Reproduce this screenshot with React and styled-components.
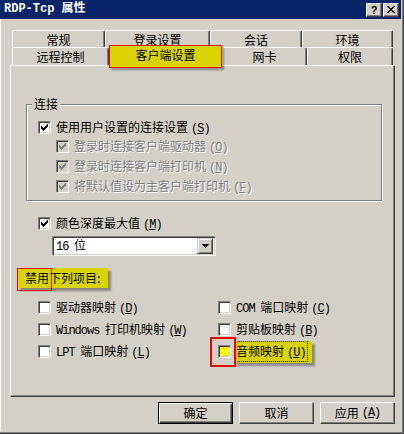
import React from "react";
import styled, { createGlobalStyle, css } from "styled-components";

const FACE = "#D4D0C8";
const YELLOW = "#D9D400";
const RED = "#FF0000";
const UI_FONT = `"Noto Sans CJK SC", "Noto Sans", sans-serif`;

const GlobalStyle = createGlobalStyle`
  html, body { margin: 0; padding: 0; background: ${FACE}; }
  body { font-family: ${UI_FONT}; font-size: 12px; color: #000; }
  *, *::before, *::after { box-sizing: border-box; }
`;

const Window = styled.div`
  width: 404px;
  height: 434px;
  display: flex;
  flex-direction: column;
  background: ${FACE};
  border-right: 1px solid #404040;
  border-bottom: 1px solid #404040;
  box-shadow: inset -1px -1px 0 #808080;
  padding: 0 2px 2px 0;
`;

const TitleBar = styled.div`
  height: 19px;
  flex: 0 0 19px;
  background: #0a246a;
  display: flex;
  align-items: center;
  padding: 0 2px 0 4px;
  gap: 1px;
`;

const TitleText = styled.div`
  flex: 1;
  color: #fff;
  font-family: "Liberation Mono", "Noto Sans CJK SC", monospace;
  font-weight: bold;
  font-size: 12px;
  line-height: 19px;
  white-space: pre;
`;

const CaptionButton = styled.div`
  width: 16px;
  height: 14px;
  background: ${FACE};
  border-top: 1px solid #fff;
  border-left: 1px solid #fff;
  border-right: 1px solid #404040;
  border-bottom: 1px solid #404040;
  box-shadow: inset -1px -1px 0 #808080;
  display: flex;
  align-items: center;
  justify-content: center;
  font-family: "Liberation Sans", sans-serif;
  font-weight: bold;
  font-size: 11px;
  line-height: 12px;
  color: #000;
`;

const Body = styled.div`
  flex: 1;
  display: flex;
  flex-direction: column;
  padding: 11px 6px 0 9px;
  border-left: 1px solid #fff;
`;

const TabRow = styled.div`
  display: flex;
  margin-left: 2px;
  width: 381px;
  height: ${(p) => p.$h}px;
  flex: 0 0 ${(p) => p.$h}px;
`;

const Tab = styled.div`
  flex: 0 0 ${(p) => p.$w}px;
  height: 100%;
  border-top: 1px solid #fff;
  border-left: 1px solid #fff;
  border-right: 1px solid #404040;
  box-shadow: inset -1px 0 0 #808080;
  border-radius: 2px 2px 0 0;
  display: flex;
  align-items: center;
  justify-content: center;
  font-size: 12px;
  line-height: 14px;
  padding-top: 1px;
  ${(p) =>
    p.$marked &&
    css`
      position: relative;
      z-index: 2;
      height: 23px;
      margin-top: -2px;
      background: ${YELLOW};
      border: 1px solid ${RED};
      border-radius: 0;
      box-shadow: 2px 2px 2px rgba(0, 0, 0, 0.35);
      padding-top: 0;
      padding-bottom: 3px;
    `}
`;

const Panel = styled.div`
  height: 332px;
  flex: 0 0 332px;
  border-top: 1px solid #fff;
  border-left: 1px solid #fff;
  border-right: 1px solid #404040;
  border-bottom: 1px solid #404040;
  box-shadow: inset -1px -1px 0 #808080;
  display: flex;
  flex-direction: column;
  align-items: flex-start;
`;

const GroupBox = styled.div`
  margin: 38px 0 0 15px;
  width: 356px;
  border: 1px solid #808080;
  box-shadow: inset 1px 1px 0 #fff, 1px 1px 0 #fff;
  display: flex;
  flex-direction: column;
  align-items: flex-start;
  padding: 0 0 7px 11px;
`;

const Legend = styled.div`
  margin: -8px 0 0 -6px;
  padding: 0 2px;
  background: ${FACE};
  line-height: 14px;
  height: 14px;
`;

const SubList = styled.div`
  display: flex;
  flex-direction: column;
  gap: 7px;
  margin: ${(p) => p.$mt || 0}px 0 0 ${(p) => p.$ml || 0}px;
`;

const Row = styled.div`
  position: relative;
  display: flex;
  align-items: center;
  gap: 5px;
  height: 13px;
  margin: ${(p) => p.$mt || 0}px 0 0 ${(p) => p.$ml || 0}px;
  white-space: nowrap;
`;

const Box = styled.span`
  width: 13px;
  height: 13px;
  flex: 0 0 13px;
  border: 1px solid;
  border-color: #808080 #fff #fff #808080;
  box-shadow: inset 1px 1px 0 #404040, inset -1px -1px 0 ${FACE};
  background: ${(p) => (p.$disabled ? FACE : p.$hl ? "#FFFF00" : "#fff")};
  display: flex;
  align-items: center;
  justify-content: center;
`;

const Label = styled.span`
  font-size: 12px;
  line-height: 13px;
  color: ${(p) => (p.$disabled ? "#808080" : "#000")};
  text-shadow: ${(p) => (p.$disabled ? "1px 1px 0 #fff" : "none")};
`;

const Latin = styled.span`
  font-family: "Liberation Mono", monospace;
  font-size: 12px;
  letter-spacing: -1px;
  margin-right: 3px;
`;

const Accel = styled.span`
  margin-left: 3px;
  font-family: "Liberation Mono", monospace;
  font-size: 12px;
  letter-spacing: -1px;
  u {
    text-decoration: underline;
    text-underline-offset: 1px;
  }
`;

const Select = styled.div`
  margin: 6px 0 0 41px;
  width: 164px;
  height: 20px;
  border: 1px solid;
  border-color: #808080 #fff #fff #808080;
  box-shadow: inset 1px 1px 0 #404040, inset -1px -1px 0 ${FACE};
  background: #fff;
  display: flex;
  align-items: center;
  padding: 2px 2px 2px 3px;
`;

const SelectValue = styled.span`
  flex: 1;
  font-size: 12px;
  line-height: 14px;
`;

const ArrowButton = styled.span`
  width: 16px;
  height: 16px;
  background: ${FACE};
  border-top: 1px solid ${FACE};
  border-left: 1px solid ${FACE};
  border-right: 1px solid #404040;
  border-bottom: 1px solid #404040;
  box-shadow: inset 1px 1px 0 #fff, inset -1px -1px 0 #808080;
  display: flex;
  align-items: center;
  justify-content: center;
`;

const Marked = styled.div`
  position: relative;
  margin: 12px 0 0 6px;
  height: 20px;
  background: ${YELLOW};
  box-shadow: 3px 3px 2px rgba(0, 0, 0, 0.35);
  display: flex;
  align-items: center;
  padding: 0 8px 0 8px;
  font-size: 12px;
  line-height: 14px;
`;

const RedFrame = styled.span`
  position: absolute;
  left: ${(p) => p.$l}px;
  top: ${(p) => p.$t}px;
  width: ${(p) => p.$w}px;
  height: ${(p) => p.$h}px;
  border: ${(p) => p.$b}px solid ${RED};
  z-index: 3;
  pointer-events: none;
`;

const Grid = styled.div`
  margin: 13px 0 0 27px;
  display: grid;
  grid-template-columns: 180px auto;
  row-gap: 9px;
`;

const HlLabel = styled.span`
  margin-left: -2px;
  height: 22px;
  background: ${YELLOW};
  box-shadow: 3px 3px 2px rgba(0, 0, 0, 0.35);
  display: flex;
  align-items: center;
  padding: 0 5px 0 2px;
`;

const Focus = styled.span`
  outline: 1px dotted #000;
  outline-offset: 0;
  padding: 2px 1px 1px 0;
  line-height: 13px;
`;

const ButtonRow = styled.div`
  display: flex;
  justify-content: flex-end;
  gap: 6px;
  margin: 5px 0 0 0;
`;

const Button = styled.div`
  width: 75px;
  height: 22px;
  background: ${FACE};
  display: flex;
  align-items: center;
  justify-content: center;
  font-size: 12px;
  line-height: 14px;
  ${(p) =>
    p.$default
      ? css`
          border: 1px solid #000;
          box-shadow: inset 1px 1px 0 #fff, inset -1px -1px 0 #404040,
            inset -2px -2px 0 #808080;
        `
      : css`
          border-top: 1px solid #fff;
          border-left: 1px solid #fff;
          border-right: 1px solid #404040;
          border-bottom: 1px solid #404040;
          box-shadow: inset -1px -1px 0 #808080;
        `}
`;

const CheckMark = ({ color = "#000" }) => (
  <svg width="7" height="7" viewBox="0 0 7 7" shapeRendering="crispEdges">
    <path
      fill={color}
      d="M0 2h1v3H0z M1 3h1v3H1z M2 4h1v3H2z M3 3h1v3H3z M4 2h1v3H4z M5 1h1v3H5z M6 0h1v3H6z"
    />
  </svg>
);

const CloseGlyph = () => (
  <svg width="8" height="7" viewBox="0 0 8 7" shapeRendering="crispEdges">
    <path
      fill="#000"
      d="M0 0h2v1H0z M6 0h2v1H6z M1 1h2v1H1z M5 1h2v1H5z M2 2h4v1H2z M3 3h2v1H3z M2 4h4v1H2z M1 5h2v1H1z M5 5h2v1H5z M0 6h2v1H0z M6 6h2v1H6z"
    />
  </svg>
);

const DownArrow = () => (
  <svg width="7" height="4" viewBox="0 0 7 4" shapeRendering="crispEdges">
    <path fill="#000" d="M0 0h7v1H0z M1 1h5v1H1z M2 2h3v1H2z M3 3h1v1H3z" />
  </svg>
);

const Check = ({ checked, disabled, hl, children, accel, ml, mt, frame, focusHl }) => {
  const text = (
    <>
      {children}
      <Accel>
        (<u>{accel}</u>)
      </Accel>
    </>
  );
  return (
    <Row $ml={ml} $mt={mt}>
      <Box $disabled={disabled} $hl={hl}>
        {checked && <CheckMark color={disabled ? "#808080" : "#000"} />}
      </Box>
      {frame && <RedFrame $l={-8} $t={-8} $w={26} $h={30} $b={2} />}
      {focusHl ? (
        <HlLabel>
          <Focus>{text}</Focus>
        </HlLabel>
      ) : (
        <Label $disabled={disabled}>{text}</Label>
      )}
    </Row>
  );
};

export default function App() {
  return (
    <>
      <GlobalStyle />
      <Window>
        <TitleBar>
          <TitleText>RDP-Tcp 属性</TitleText>
          <CaptionButton>?</CaptionButton>
          <CaptionButton>
            <CloseGlyph />
          </CaptionButton>
        </TitleBar>
        <Body>
          <TabRow $h={17}>
            <Tab $w={93}>常规</Tab>
            <Tab $w={105}>登录设置</Tab>
            <Tab $w={92}>会话</Tab>
            <Tab $w={91}>环境</Tab>
          </TabRow>
          <TabRow $h={18}>
            <Tab $w={97}>远程控制</Tab>
            <Tab $w={113} $marked>
              客户端设置
            </Tab>
            <Tab $w={85}>网卡</Tab>
            <Tab $w={86}>权限</Tab>
          </TabRow>
          <Panel>
            <GroupBox>
              <Legend>连接</Legend>
              <Check checked accel="S" mt={10}>
                使用用户设置的连接设置
              </Check>
              <SubList $mt={6} $ml={18}>
                <Check checked disabled accel="O">
                  登录时连接客户端驱动器
                </Check>
                <Check checked disabled accel="N">
                  登录时连接客户端打印机
                </Check>
                <Check checked disabled accel="F">
                  将默认值设为主客户端打印机
                </Check>
              </SubList>
            </GroupBox>
            <Check checked accel="M" mt={16} ml={27}>
              颜色深度最大值
            </Check>
            <Select>
              <SelectValue>
                <Latin>16</Latin> 位
              </SelectValue>
              <ArrowButton>
                <DownArrow />
              </ArrowButton>
            </Select>
            <Marked>
              禁用下列项目:
              <RedFrame $l={0} $t={0} $w={35} $h={23} $b={1} />
            </Marked>
            <Grid>
              <Check accel="D">驱动器映射</Check>
              <Check accel="C">
                <Latin>COM</Latin> 端口映射
              </Check>
              <Check accel="W">
                <Latin>Windows</Latin> 打印机映射
              </Check>
              <Check accel="B">剪贴板映射</Check>
              <Check accel="L">
                <Latin>LPT</Latin> 端口映射
              </Check>
              <Check accel="U" hl frame focusHl>
                音频映射
              </Check>
            </Grid>
          </Panel>
          <ButtonRow>
            <Button $default>确定</Button>
            <Button>取消</Button>
            <Button>
              应用<Accel>(<u>A</u>)</Accel>
            </Button>
          </ButtonRow>
        </Body>
      </Window>
    </>
  );
}
